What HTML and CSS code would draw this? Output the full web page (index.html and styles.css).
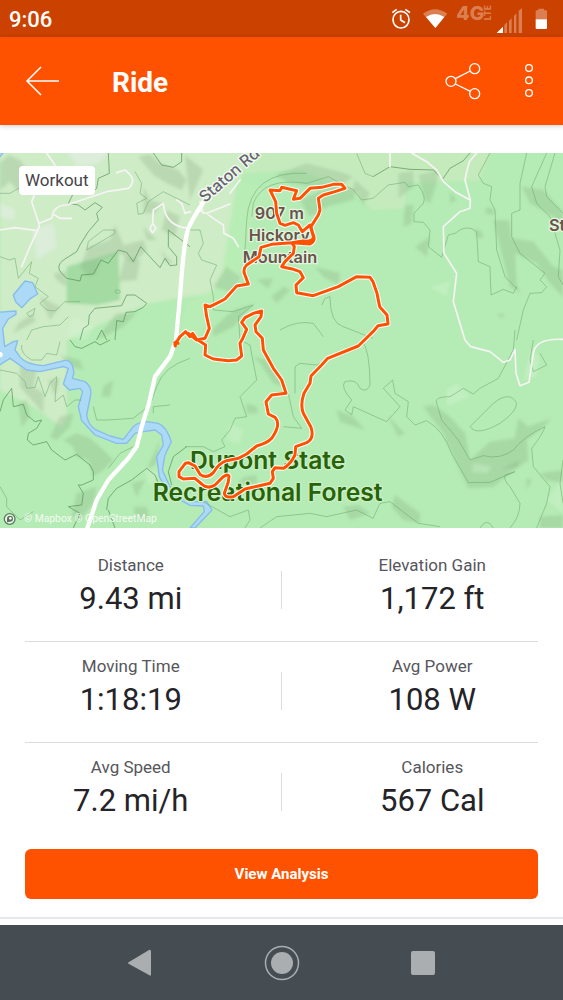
FILE: index.html
```html
<!DOCTYPE html>
<html lang="en">
<head>
<meta charset="utf-8">
<meta name="viewport" content="width=device-width, initial-scale=1">
<title>Ride</title>
<link rel="stylesheet" href="styles.css">
</head>
<body>
<div class="screen">
  <div class="status">
    <span class="clock">9:06</span>
    <div class="status-icons">
      <svg width="28" height="37" viewBox="30 0 84 111" fill="none" stroke="#fff" stroke-width="5"><ellipse cx="63" cy="59" rx="24" ry="25"/><path d="M62 44V60L75 68M37 38L50 28M76 28L90 38"/></svg>
      <svg width="30" height="37" viewBox="126 0 90 111"><path d="M129 41Q165 14 202 41L166 84Z" fill="#db7f52"/><path d="M138 51Q165 33 193 51L166 84Z" fill="#fff"/></svg>
      <svg width="36" height="37" viewBox="228 0 108 111" class="lte"><text x="229" y="59" font-size="58">4G</text><text transform="translate(332 61) rotate(-90)" font-size="26">LTE</text></svg>
      <svg width="34" height="37" viewBox="348 0 102 111"><path d="M373 75L381 67V99H373ZM387 63L395 55V99H387ZM402 48L409 40V99H402ZM416 33L426 24V99H416Z" fill="#db7f52"/><path d="M350 99L369 80V99Z" fill="#fff"/></svg>
      <svg width="14" height="37" viewBox="462 0 42 111"><path d="M467 58V34Q467 31 470 31H475V26H492V31H498Q501 31 501 34V58Z" fill="#db7f52"/><path d="M467 58H501V84Q501 87 498 87H470Q467 87 467 84Z" fill="#fff"/></svg>
    </div>
  </div>
  <header class="appbar">
    <button class="icon-btn" aria-label="Back"><svg width="36" height="36" viewBox="0 0 36 36"><path d="M34 18H2M16 4L2 18L16 32"/></svg></button>
    <h1>Ride</h1>
    <button class="icon-btn" aria-label="Share"><svg width="36" height="40" viewBox="195 183 108 120" class="thick"><circle cx="213" cy="244" r="15"/><circle cx="284" cy="206" r="15"/><circle cx="284" cy="281" r="15"/><path d="M226 236L271 213M226 252L271 274"/></svg></button>
    <button class="icon-btn" aria-label="More options"><svg width="12" height="40" viewBox="430 183 36 120" class="thick"><circle cx="448" cy="204" r="10"/><circle cx="448" cy="241" r="10"/><circle cx="448" cy="279" r="10"/></svg></button>
  </header>
  <main>
    <section class="map" aria-label="Route map">
      <svg class="map-art" viewBox="0 9 1689 1125" preserveAspectRatio="xMidYMid slice">
        <defs><filter id="soft" x="-5%" y="-5%" width="110%" height="110%"><feGaussianBlur stdDeviation="4"/></filter></defs>
        <rect y="9" width="1689" height="1125" fill="#b5ebb4"/>
        <g filter="url(#soft)">
          <path d="M0 0H745L725 75L710 150L700 300L640 430L560 440L450 460L350 500L200 570V350L355 305V450L200 460V800L185 830L100 770L0 720Z" fill="#ceecc6"/>
          <path d="M745 0H1470L1440 90L1215 97V175L1119 180L1050 120L900 60L730 70Z" fill="#c5ebbd"/>
          <path d="M200 350L355 305L360 450L290 465L200 460Z" fill="#a3dba3"/>
          <path d="M200 0H330L300 40L230 50ZM100 240L160 220L170 290L110 330ZM0 160L45 180L40 210L0 200Z" fill="#dcedd9"/>
          <path d="M710 90L830 130L760 200L710 400L640 480L590 560L540 550L560 460L660 410Z" fill="#b9edb6"/>
        </g>
        <g fill="#789f74" fill-opacity=".24" filter="url(#soft)">
          <path d="M415 20L450 12L480 40L535 60L560 90L545 120L500 100L460 75Z"/>
          <path d="M265 290L330 270L345 225L370 285L430 270L440 300L400 340L360 310L300 330L290 370L265 380L240 350Z"/>
          <path d="M375 320L420 330L410 390L355 395ZM160 370L200 365L200 410L170 390Z"/>
          <path d="M430 110L450 150L485 160L465 190L430 190ZM500 180L540 200L525 260L485 240ZM430 230L470 270L440 270ZM480 300L520 340L500 340Z"/>
          <path d="M0 40L25 15L60 30L90 70L60 130L30 95L0 120ZM55 520L100 490L105 515L40 550ZM120 440L180 470L150 510Z"/>
          <path d="M310 540L350 490L410 490L370 530L290 570Z"/>
          <path d="M555 15L610 60L570 150ZM825 75L920 40L1020 65L1060 80L1000 120L870 100ZM900 150L970 120L1070 115L1060 150L980 170L930 200Z"/>
          <path d="M640 410L680 350L720 380L700 430ZM770 390L820 385L805 415ZM815 440L850 410L870 420L830 460ZM640 535L700 480L760 462L700 530L640 560Z"/>
          <path d="M945 350L1020 370L1015 405L970 380ZM1065 90L1110 130L1090 165L1060 110Z"/>
          <path d="M1195 70L1240 62V110L1195 145ZM1255 75L1315 60L1310 100L1290 160L1275 150ZM1215 165L1240 165L1235 220L1210 230ZM1245 290L1290 260L1280 320ZM1350 125L1370 150L1350 160Z"/>
          <path d="M1565 110L1630 120L1689 185V230L1660 200L1590 160ZM1480 210L1528 212L1535 265L1600 275L1660 350L1689 360V440L1650 400L1610 340L1545 310L1550 400L1560 430L1530 410L1510 330Z"/>
          <path d="M1425 235L1445 245L1450 265L1430 262ZM1460 170L1485 180L1480 195L1455 190ZM1490 495L1510 490L1510 505Z"/>
          <path d="M60 640L110 660L100 710L130 730L130 790L95 750L60 710ZM145 690L180 685L165 740ZM55 760L80 750L90 800L65 830Z"/>
          <path d="M180 800L220 790L210 830L170 870L150 860ZM190 870L230 850L270 865L310 900L340 930L310 960L280 980L265 930L230 920L220 890Z"/>
          <path d="M180 615L240 630L250 660L210 650ZM310 710L340 690L330 740L305 740ZM480 870L470 940L440 960ZM230 1030L290 1010L280 1060L240 1110L215 1100Z"/>
          <path d="M395 1000L435 990L410 1040ZM400 1070L440 1070L450 1110L410 1110Z"/>
          <path d="M760 620L780 640L820 700L850 710L830 670L800 630ZM740 760L770 770L775 790L740 790ZM1010 780L1060 800L1095 840L1020 815ZM735 980L770 975L770 1000L710 1000Z"/>
          <path d="M1270 770L1300 765L1350 800L1395 850L1410 930L1470 875L1545 865L1555 805L1585 830L1655 805L1620 840L1580 870L1585 930L1530 970L1480 1010L1405 1015L1365 930L1330 850Z"/>
          <path d="M1185 1035L1260 1090L1260 1120L1210 1110L1175 1070ZM1165 800L1215 850L1195 860ZM1500 960L1550 950L1560 930ZM1620 970L1689 960V1000L1640 990ZM1580 985L1595 990L1580 1020ZM1620 1100L1689 1095V1134H1620ZM1030 1070L1075 1065L1110 1090L1050 1110Z"/>
        </g>
        <g fill="#d8f7d5" fill-opacity=".35" filter="url(#soft)">
          <path d="M220 500L280 530L260 570L200 560ZM430 950L480 970L450 1010ZM1340 720L1370 700L1410 740L1340 770ZM1420 940L1475 950L1460 970L1415 965ZM1590 600L1620 620L1610 680L1570 690ZM1290 410L1350 395L1340 440ZM1640 1050L1689 980V1090ZM690 820L730 840L720 880L680 870Z"/>
        </g>
        <g class="water">
          <path d="M40 435L75 393L98 398L113 432L92 445L65 473L47 455ZM-9 487L48 483L48 493L25 507L8 535L14 590L40 575L53 572L45 600L62 623Q78 643 130 647L195 631Q213 630 218 650L222 668L217 685L255 695Q276 710 272 735L260 795Q263 822 285 838L330 858L370 868L400 830Q415 816 440 815L475 820Q500 830 514 875L495 915L487 960L510 1010L580 1055L620 1055L636 1080L585 1134H570L613 1085L610 1068L570 1066L505 1030L478 980L470 920L490 885L485 855L465 840L430 845L405 850L380 880L350 880L285 855L245 812L235 770L248 725L240 715L208 720L190 702L205 655L190 650L120 665L80 660L30 625L-9 650Z"/>
          <path d="M-9 30L12 5H-9Z"/>
        </g>
        <g class="contours">
          <path class="dark" d="M325 9L328 70L295 85L290 115L275 130L225 120L205 160L235 165L255 180L285 158L307 172L290 190L295 210L265 245L240 285L230 305L190 330Q165 350 185 370L200 385L240 393L245 375L280 372L303 330L325 340L355 300L380 307L400 335L422 290L480 353L495 325L510 347L530 345L530 320L505 290L505 240L570 290"/>
          <path d="M0 130L30 130L55 115L110 110M260 300L265 275L310 240L345 240L345 250L315 268ZM0 320L28 330L45 325L55 385L95 335L88 370L115 385L105 410L145 440L120 460L140 480L165 483L195 455L240 455M345 425a8 5 0 1 0 16 0a8 5 0 1 0-16 0M80 490L105 475L100 495L88 500ZM80 570L95 540L130 530L180 525L205 500"/>
          <path class="dark" d="M240 570L250 535L265 525L268 495L285 475L365 467L380 435L405 435L440 460L430 472L405 485L378 487L370 515L350 512L345 570M460 9L485 45L520 52L545 35V9M290 570L305 540L320 570"/>
          <path d="M405 65L425 100L420 130L440 145L410 160L415 193L430 190L445 155L490 125L570 165"/>
          <path d="M65 585Q60 610 95 630L125 630L140 610L170 615L180 575M0 660L50 670L75 695L80 715L105 712L115 680L135 740L150 700L170 680L165 755L190 735L200 770L225 750L245 750"/>
          <path d="M280 770L290 810L320 810L400 805L450 765L470 710Q490 650 570 625M510 765L460 770L460 790"/>
          <path class="dark" d="M0 785L10 750L35 715L40 770L70 763L80 795L105 815L125 810L110 835L85 850L82 870L100 885L140 875L155 900L195 930L230 913L270 945L280 965L280 990L245 1005L235 1005L250 1030L245 1065L205 1070L240 1090L220 1134M320 1080L325 1045L350 1015L395 990L440 955L465 975L475 1000M325 1080L345 1134M560 890L520 920L505 965L515 1005M210 570L225 590L245 595L285 575L300 585L330 570"/>
          <path d="M0 1010L20 1045L20 1070L60 1110L100 1085M325 955L360 910L400 890"/>
          <path d="M555 240L600 240L610 280L595 310L605 330L650 345L630 390L640 440L640 480L700 485L760 465L715 500L720 570L750 585L770 690L720 740L740 800L705 805L690 840L665 870L675 890L640 905L610 890L555 890M735 300L740 210Q750 60 920 70"/>
          <path d="M755 200L760 160Q790 80 920 100L985 80L1060 120L1085 150L1119 145L1165 105L1215 97L1225 110L1255 105Q1280 140 1270 160L1242 190V215L1270 217L1290 240L1285 290L1325 322L1345 255L1365 250Q1400 220 1430 245L1435 335L1470 350L1473 435L1510 418L1540 430L1550 410"/>
          <path class="dark" d="M1119 80L1170 50L1230 58L1300 60L1328 87L1350 55L1390 32L1410 9"/>
          <path d="M1470 9L1435 75L1450 100L1475 110L1470 150L1485 180L1490 300L1515 380L1550 415M1580 9L1560 100L1560 180L1535 190L1535 260L1560 310L1635 370L1620 390L1640 410L1625 428L1590 430L1570 480L1550 570M1640 9L1595 110L1610 160L1650 200L1680 300L1675 380L1689 405M1665 9L1635 110L1640 140L1689 190M840 540Q890 510 940 520L970 560M965 465L975 445L990 440Q990 520 1030 530L1119 565M885 730V650L900 640L950 645L995 625M865 730L880 800L905 835L850 830M1070 10L1095 70L1119 80"/>
          <path d="M1085 570Q1110 600 1110 705Q1100 730 1080 715Q1070 685 1035 695Q1020 710 1055 750L1035 780L1055 795L1060 770L1160 815L1200 770L1150 715L1178 690L1185 730L1225 755L1220 800L1245 825L1280 812Q1330 840 1355 910L1405 998L1470 997L1545 965L1515 975Q1510 990 1530 1010L1560 1060Q1560 1100 1530 1134M1310 760Q1300 740 1350 740L1390 715L1420 732L1440 715L1495 685L1540 600L1545 540M1310 760L1325 810L1375 870L1410 930L1450 917Q1500 930 1540 900Q1570 860 1635 830Q1630 850 1595 895L1600 950L1650 1010L1640 1060L1610 1134M1410 830L1480 760Q1530 720 1550 760Q1550 785 1500 820Q1430 860 1410 830Z"/>
          <path d="M600 1050L690 1100L745 1080L750 1110L735 1134M780 1134L830 1100L930 1090L980 1100L1070 1080L1119 1105L1140 1060L1170 1055L1255 1120L1320 1130M1440 1134Q1460 1100 1480 1134M1600 570L1590 630L1600 665L1640 645L1620 610M1689 930L1680 1000L1689 1060"/>
        </g>
        <g class="roads">
          <path d="M65 350L90 290L118 230L115 215L95 155L105 130M118 220L155 205Q160 165 200 165L320 125L385 115Q415 90 375 60L350 68M160 193L180 205L215 205M0 240L45 233L110 242M140 9L165 45M455 245L450 235L458 220L468 235L458 248ZM458 220L460 180L490 160Q495 230 568 235M530 150L545 160L555 190L572 185"/>
          <path d="M590 180L620 190L690 162M620 190L640 205L670 225L672 250L700 265L715 290M610 190L600 155M690 130L720 90M1170 9V50M1235 9L1280 35L1310 60L1330 95L1365 125L1410 150M1430 9L1408 35L1400 65L1395 90L1411 150L1410 175L1380 185L1330 230L1332 310L1370 370L1360 455L1395 570L1412 590L1470 605L1510 637L1530 630L1545 598L1548 670L1560 707L1587 697L1600 610Q1605 565 1689 568"/>
          <path class="main" d="M615 150C595 180 570 215 562 245C550 290 545 370 540 440L528 570L510 620L465 680L447 760L425 830L410 890L385 925L325 990L290 1050L262 1134"/>
        </g>
        <circle cx="0" cy="614" r="8" fill="#fff"/>
        <g class="labels">
          <text class="road" transform="translate(615 160) rotate(-41)">Staton Rd</text>
          <text class="peak" x="838" y="208" text-anchor="middle">907 m</text>
          <text class="peak" x="838" y="274" text-anchor="middle">Hickory</text>
          <text class="peak" x="840" y="339" text-anchor="middle">Mountain</text>
          <text class="peak" x="1647" y="243">St</text>
          <text class="park" x="803" y="957" text-anchor="middle">Dupont State</text>
          <text class="park" x="803" y="1054" text-anchor="middle">Recreational Forest</text>
          <text class="credit" x="72" y="1115">© Mapbox © OpenStreetMap</text>
        </g>
        <circle cx="29" cy="1107" r="16" fill="#edf7ec" stroke="#5d7b60" stroke-width="4"/><path d="M21 1117V1106A9 9 0 1 1 30 1115Z" fill="#58725b"/><circle cx="31" cy="1105" r="4" fill="#fff"/>
        <g class="route">
          <path id="track" d="M525 584L540 560L557 545L570 560L578 550L590 568L617 585L615 615L640 627L685 632L710 630L725 618L720 580L727 568L740 538L725 517L735 503L760 490L785 483L783 500L765 525L768 545L787 565L790 600L820 655L845 690L858 730L815 735L798 755L805 792L825 802Q845 823 815 865Q802 880 770 888L740 912L715 925L680 932Q657 939 640 968Q620 988 600 973L585 948L565 938L556 940L537 965V980L550 987L585 985L605 1002Q623 1019 645 1005L670 980Q684 970 687 979L685 995L673 1030Q675 1045 700 1040L735 1017L775 1008L810 1000L820 985L817 965L825 953L850 955Q870 945 885 915L887 890L920 878Q944 865 933 832L910 790Q900 765 912 730L930 700L933 678L965 645L983 625L1045 600L1075 588L1119 545L1134 527L1164 522L1161 495L1139 470L1131 430L1119 395L1110 382L1070 380L1015 410L940 437L890 428L888 405L910 383L900 365L880 358L845 350L855 335L880 310L883 290L875 278L930 282Q950 272 938 250L933 230L955 195L960 180L955 145L970 135L1005 125L1035 115L1025 103H1000L965 112L930 115L900 145L880 148L890 122L845 112L840 122L810 120L827 155L830 190L840 220L855 226L880 218L895 225L907 245L930 225L940 260Q940 276 908 273L875 278L815 283L783 292L777 320L740 345Q729 355 733 370L745 402L710 408L675 447L660 455L630 470L615 465L620 500L628 535L615 565L590 570L565 550"/>
          <use href="#track" class="line"/>
          <path class="line" d="M524 578L534 580M526 588L529 575"/>
        </g>
      </svg>
      <span class="chip">Workout</span>
    </section>
    <dl class="stats">
      <div class="row">
        <div class="stat"><dt>Distance</dt><dd>9.43 mi</dd></div>
        <div class="stat"><dt>Elevation Gain</dt><dd>1,172 ft</dd></div>
      </div>
      <div class="row">
        <div class="stat"><dt>Moving Time</dt><dd>1:18:19</dd></div>
        <div class="stat"><dt>Avg Power</dt><dd>108 W</dd></div>
      </div>
      <div class="row">
        <div class="stat"><dt>Avg Speed</dt><dd>7.2 mi/h</dd></div>
        <div class="stat"><dt>Calories</dt><dd>567 Cal</dd></div>
      </div>
    </dl>
    <div class="actions"><button class="primary">View Analysis</button></div>
  </main>
  <nav class="navbar" aria-label="System">
    <button aria-label="Back"><svg width="36" height="36" viewBox="0 0 36 36"><path d="M6 17L26 5Q28 4 28 7V29Q28 32 26 30L6 19Q4 18 6 17Z" fill="#aaaeb1"/></svg></button>
    <button aria-label="Home"><svg width="36" height="36" viewBox="0 0 36 36"><circle cx="18" cy="18" r="16.5" fill="none" stroke="#aaaeb1" stroke-width="1.5"/><circle cx="18" cy="18" r="11" fill="#aaaeb1"/></svg></button>
    <button aria-label="Recent apps"><svg width="36" height="36" viewBox="0 0 36 36"><rect x="6" y="6" width="24" height="24" rx="2" fill="#aaaeb1"/></svg></button>
  </nav>
</div>
</body>
</html>
```
FILE: styles.css
```css
* { box-sizing: border-box; }
body {
  margin: 0;
  background: #fff;
  color: #242428;
  font-family: Roboto, "Liberation Sans", sans-serif;
}
button {
  border: 0;
  padding: 0;
  background: none;
  font: inherit;
  cursor: pointer;
}
svg { display: block; }
.screen {
  min-height: 100vh;
  display: flex;
  flex-direction: column;
}
main { flex: 1; display: flex; flex-direction: column; }

.status {
  display: flex;
  align-items: center;
  justify-content: space-between;
  height: 37px;
  padding: 0 15px 0 9px;
  background: #cb4200;
  color: #fff;
}
.clock { font-size: 22px; line-height: 26px; padding-top: 2px; font-weight: 500; }
.status-icons { display: flex; gap: 4px; }
.lte {
  fill: #db7f52;
  font-family: Inter, sans-serif;
  font-weight: 800;
}

.appbar {
  display: flex;
  align-items: center;
  height: 88px;
  padding: 0 28px 0 25px;
  background: #ff5200;
  color: #fff;
  box-shadow: 0 1px 5px rgba(0, 0, 0, .2);
}
.appbar h1 {
  flex: 1;
  margin: 0 0 0 51px;
  padding-top: 3px;
  font-size: 28px;
  line-height: 32px;
  font-weight: 700;
}
.icon-btn svg { fill: none; stroke: #fff; stroke-width: 1.5; }
.icon-btn svg.thick { stroke-width: 4; }
.icon-btn + .icon-btn { margin-left: 42px; }

.map {
  position: relative;
  margin-top: 28px;
}
.map-art { width: 100%; height: auto; aspect-ratio: 563 / 375; }
.chip {
  position: absolute;
  top: 13px;
  left: 19px;
  padding: 4px 6px;
  border-radius: 4px;
  background: #fff;
  color: #44444a;
  font-size: 17px;
  line-height: 21px;
}
.water { fill: #acd9f5; stroke: #87bdea; stroke-width: 4; stroke-linejoin: round; }
.contours {
  fill: none;
  stroke: #65a064;
  stroke-opacity: .48;
  stroke-width: 3;
  stroke-linejoin: round;
}
.contours .dark { stroke: #4f8e4f; stroke-opacity: .65; }
.roads {
  fill: none;
  stroke: #f7f4f5;
  stroke-width: 5;
  stroke-linejoin: round;
  stroke-linecap: round;
}
.roads .main { stroke: #fff; stroke-width: 13; }
.labels text {
  font-family: Inter, Roboto, sans-serif;
  font-weight: 500;
  paint-order: stroke;
  stroke-linejoin: round;
}
.labels .peak { font-size: 49px; font-weight: 600; fill: #68544a; stroke: #e3f5df; stroke-width: 8; }
.labels .road { font-size: 48px; fill: #65656e; stroke: #f4faf2; stroke-width: 8; }
.labels .park { font-size: 74px; font-weight: 600; fill: #286309; stroke: #cbf0c5; stroke-width: 8; }
.labels .credit { font-family: Roboto, sans-serif; font-size: 31px; font-weight: 400; fill: #f5fcf4; }
.route {
  fill: none;
  stroke: #fff;
  stroke-width: 15;
  stroke-linejoin: round;
  stroke-linecap: round;
}
.route .line { stroke: #ff5200; stroke-width: 9; }

.stats { margin: 12px 25px 0; }
.row {
  display: grid;
  grid-template-columns: 1fr 1fr;
  column-gap: 90px;
  height: 101px;
  padding-top: 14px;
  position: relative;
  border-top: 1px solid #dcdce0;
}
.row:first-child { border-top-color: transparent; }
.row::after {
  content: "";
  position: absolute;
  left: calc(50% - 1px);
  top: 30px;
  width: 1px;
  height: 38px;
  background: #dcdce0;
}
.stat { text-align: center; white-space: nowrap; }
.stat dt { font-size: 17px; line-height: 20px; color: #56565c; }
.stat dd { margin: 5px 0 0; font-size: 31px; line-height: 38px; }

.actions { padding: 6px 25px 18px; border-bottom: 2px solid #e6e6ed; }
.primary {
  width: 100%;
  height: 50px;
  border-radius: 6px;
  background: #ff5200;
  color: #fff;
  font-size: 15px;
  font-weight: 700;
}

.navbar {
  display: flex;
  justify-content: center;
  gap: 105px;
  height: 75px;
  background: #454d52;
}
.navbar button { display: flex; align-items: center; }
```
